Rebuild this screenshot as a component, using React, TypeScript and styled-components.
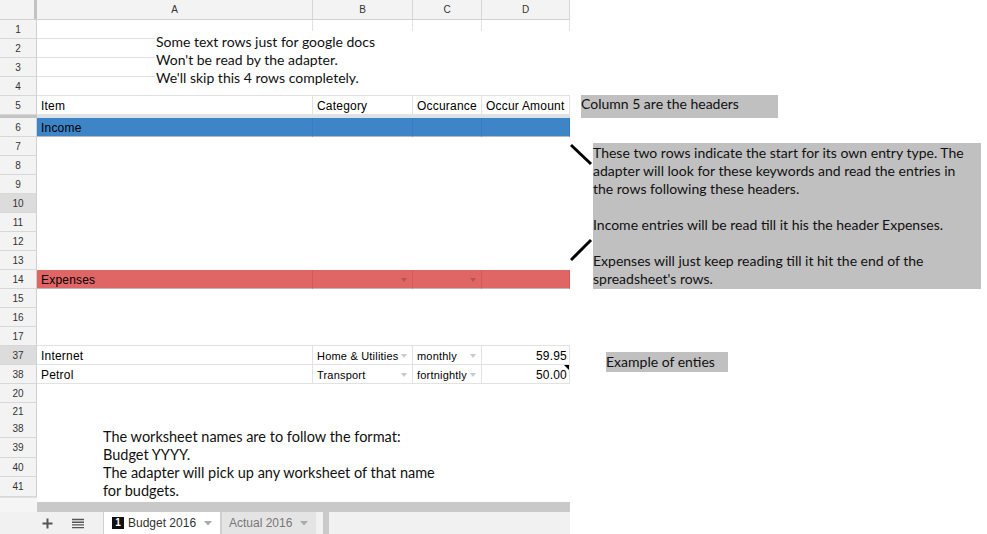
import React from "react";
import styled, { createGlobalStyle } from "styled-components";

const SHEET_FONT = `"Liberation Sans", Arial, sans-serif`;
const NOTE_FONT = `Lato, "Open Sans", sans-serif`;

const COLS = [276, 100, 69, 88];

const GlobalStyle = createGlobalStyle`
  html, body { margin: 0; padding: 0; background: #fff; }
  body { width: 987px; height: 534px; overflow: hidden; }
  #root { width: 987px; height: 534px; }
`;

const Page = styled.div`
  display: flex;
  width: 987px;
  height: 534px;
  background: #fff;
`;

const Sheet = styled.div`
  position: relative;
  width: 570px;
  flex: none;
  display: flex;
  flex-direction: column;
  font-family: ${SHEET_FONT};
  color: #000;
`;

const HeaderRow = styled.div`
  display: flex;
  height: 20px;
  flex: none;
  box-sizing: border-box;
  background: #f3f3f3;
  border-bottom: 1px solid #d0d0d0;
`;

const Corner = styled.div`
  width: 37px;
  box-sizing: border-box;
  border-right: 3px solid #c2c2c2;
`;

const ColHead = styled.div<{ $w: number }>`
  width: ${(p) => p.$w}px;
  box-sizing: border-box;
  border-right: 1px solid #d6d6d6;
  display: flex;
  align-items: center;
  justify-content: center;
  font-size: 10px;
  color: #333;
`;

const Row = styled.div<{ $h: number }>`
  display: flex;
  flex: none;
  height: ${(p) => p.$h}px;
`;

const RowNum = styled.div<{ $active?: boolean; $noLine?: boolean }>`
  width: 37px;
  flex: none;
  box-sizing: border-box;
  background: ${(p) => (p.$active ? "#dcdcdc" : "#f3f3f3")};
  border-right: 1px solid #d0d0d0;
  border-bottom: ${(p) => (p.$noLine ? "none" : "1px solid #d8d8d8")};
  display: flex;
  align-items: center;
  justify-content: center;
  font-size: 10px;
  color: #333;
`;

type Tone = "plain" | "income" | "expense";

const toneBg: Record<Tone, string> = {
  plain: "#ffffff",
  income: "#3d85c6",
  expense: "#e06666",
};

const toneLine: Record<Tone, string> = {
  plain: "#e2e2e2",
  income: "#3a7dbb",
  expense: "#d25a5a",
};

const Cell = styled.div<{ $w: number; $tone?: Tone; $right?: boolean; $size?: number }>`
  position: relative;
  width: ${(p) => p.$w}px;
  flex: none;
  box-sizing: border-box;
  display: flex;
  align-items: center;
  justify-content: ${(p) => (p.$right ? "flex-end" : "flex-start")};
  padding: 1px 2px 0 4px;
  font-size: ${(p) => p.$size ?? 12}px;
  letter-spacing: 0.2px;
  white-space: nowrap;
  background: ${(p) => toneBg[p.$tone ?? "plain"]};
  border-right: 1px solid ${(p) => toneLine[p.$tone ?? "plain"]};
  border-bottom: 1px solid ${(p) => (p.$tone && p.$tone !== "plain" ? "#b9b9b9" : "#e2e2e2")};
`;

const Blank = styled.div<{ $line?: boolean }>`
  flex: 1;
  background: #fff;
  border-bottom: ${(p) => (p.$line ? "1px solid #e2e2e2" : "none")};
`;

const Caret = styled.span<{ $dark?: boolean }>`
  margin-left: auto;
  margin-right: 3px;
  width: 0;
  height: 0;
  border-left: 3.5px solid transparent;
  border-right: 3.5px solid transparent;
  border-top: 4px solid ${(p) => (p.$dark ? "rgba(0,0,0,0.18)" : "#c9c9c9")};
`;

const NoteMark = styled.span`
  position: absolute;
  top: 0;
  right: 0;
  width: 0;
  height: 0;
  border-left: 5px solid transparent;
  border-top: 5px solid #000;
`;

const FreezeBar = styled.div`
  display: flex;
  height: 3px;
  flex: none;
  background: #dde1e6;
  &::before {
    content: "";
    width: 37px;
    background: #c4c4c4;
  }
`;

const ScrollStrip = styled.div`
  display: flex;
  height: 15px;
  flex: none;
  align-items: flex-end;
`;

const ScrollCorner = styled.div`
  width: 37px;
  height: 15px;
  box-sizing: border-box;
  background: #f5f5f5;
  border-top: 1px solid #e0e0e0;
`;

const ScrollTrack = styled.div`
  flex: 1;
  height: 10px;
  background: #c9c9c9;
`;

const TabBar = styled.div`
  display: flex;
  height: 22px;
  flex: none;
  background: #f1f1f1;
  font-size: 12px;
`;

const TabTools = styled.div`
  width: 103px;
  display: flex;
  align-items: center;
  padding-left: 42px;
  gap: 19px;
  box-sizing: border-box;
  color: #666;
`;

const Tab = styled.div<{ $active?: boolean; $w: number }>`
  width: ${(p) => p.$w}px;
  box-sizing: border-box;
  display: flex;
  align-items: center;
  padding: 0 4px 0 ${(p) => (p.$active ? 8 : 7)}px;
  background: ${(p) => (p.$active ? "#ffffff" : "#e4e4e4")};
  color: ${(p) => (p.$active ? "#333" : "#777")};
  border-left: 1px solid #d0d0d0;
  border-right: ${(p) => (p.$active ? "1px solid #d0d0d0" : "none")};
`;

const Badge = styled.span`
  width: 12px;
  height: 12px;
  margin-right: 4px;
  background: #111;
  color: #fff;
  font-size: 10px;
  font-weight: bold;
  display: flex;
  align-items: center;
  justify-content: center;
  line-height: 1;
`;

const TabGap = styled.div`
  width: 7px;
`;

const TabDivider = styled.div`
  width: 6px;
  background: #cacaca;
`;

const TextBox = styled.div<{
  $top: number;
  $left: number;
  $w: number;
  $h: number;
  $padTop: number;
  $padLeft: number;
  $size: number;
}>`
  position: absolute;
  top: ${(p) => p.$top}px;
  left: ${(p) => p.$left}px;
  width: ${(p) => p.$w}px;
  height: ${(p) => p.$h}px;
  box-sizing: border-box;
  padding: ${(p) => p.$padTop}px 0 0 ${(p) => p.$padLeft}px;
  background: #fff;
  font-family: ${NOTE_FONT};
  font-size: ${(p) => p.$size}px;
  line-height: 18px;
  color: #111;
  white-space: nowrap;
`;

const Notes = styled.div`
  flex: 1;
  display: flex;
  flex-direction: column;
  align-items: flex-start;
  font-family: ${NOTE_FONT};
  font-size: 14px;
  line-height: 18px;
  color: #111;
`;

const Callout = styled.div<{ $w: number; $h: number; $pad?: number }>`
  width: ${(p) => p.$w}px;
  height: ${(p) => p.$h}px;
  box-sizing: border-box;
  padding-top: ${(p) => p.$pad ?? 0}px;
  background: #c0c0c0;
  white-space: nowrap;
`;

const HeadersNote = styled(Callout)`
  margin: 95px 0 0 11px;
`;

const ConnectorRow = styled.div`
  display: flex;
  margin-top: 25px;
`;

const ExampleNote = styled(Callout)`
  margin: 63px 0 0 36px;
`;

type DataRow = {
  n: string;
  h?: number;
  kind: "cells" | "blank";
  tone?: Tone;
  active?: boolean;
  noLine?: boolean;
  line?: boolean;
  cells?: { text?: string; right?: boolean; size?: number; caret?: boolean; note?: boolean }[];
};

const rows: DataRow[] = [
  { n: "1", kind: "cells", cells: [{}, {}, {}, {}] },
  { n: "2", kind: "cells", cells: [{}, {}, {}, {}] },
  { n: "3", kind: "cells", cells: [{}, {}, {}, {}] },
  { n: "4", kind: "cells", cells: [{}, {}, {}, {}] },
  {
    n: "5",
    kind: "cells",
    cells: [{ text: "Item" }, { text: "Category" }, { text: "Occurance" }, { text: "Occur Amount" }],
  },
];

const rowsAfterFreeze: DataRow[] = [
  { n: "6", kind: "cells", tone: "income", cells: [{ text: "Income" }, {}, {}, {}] },
  { n: "7", kind: "blank" },
  { n: "8", kind: "blank" },
  { n: "9", kind: "blank" },
  { n: "10", kind: "blank", active: true },
  { n: "11", kind: "blank" },
  { n: "12", kind: "blank" },
  { n: "13", kind: "blank" },
  {
    n: "14",
    kind: "cells",
    tone: "expense",
    cells: [{ text: "Expenses" }, { caret: true }, { caret: true }, {}],
  },
  { n: "15", kind: "blank" },
  { n: "16", kind: "blank" },
  { n: "17", kind: "blank", line: true },
  {
    n: "37",
    kind: "cells",
    active: true,
    cells: [
      { text: "Internet" },
      { text: "Home & Utilities", size: 11, caret: true },
      { text: "monthly", size: 11, caret: true },
      { text: "59.95", right: true },
    ],
  },
  {
    n: "38",
    kind: "cells",
    cells: [
      { text: "Petrol" },
      { text: "Transport", size: 11, caret: true },
      { text: "fortnightly", size: 11, caret: true },
      { text: "50.00", right: true, note: true },
    ],
  },
  { n: "20", kind: "blank" },
  { n: "21", kind: "blank", h: 17, noLine: true },
  { n: "38", kind: "blank", h: 18 },
  { n: "39", kind: "blank", h: 20 },
  { n: "40", kind: "blank", h: 19 },
  { n: "41", kind: "blank", h: 20 },
];

function SheetRow({ r }: { r: DataRow }) {
  return (
    <Row $h={r.h ?? 19}>
      <RowNum $active={r.active} $noLine={r.noLine}>
        {r.n}
      </RowNum>
      {r.kind === "blank" ? (
        <Blank $line={r.line} />
      ) : (
        r.cells!.map((c, i) => (
          <Cell key={i} $w={COLS[i]} $tone={r.tone} $right={c.right} $size={c.size}>
            {c.text}
            {c.caret && <Caret $dark={r.tone === "expense"} />}
            {c.note && <NoteMark />}
          </Cell>
        ))
      )}
    </Row>
  );
}

function PlusIcon() {
  return (
    <svg width="11" height="11" viewBox="0 0 11 11">
      <path d="M5.5 0.5v10M0.5 5.5h10" stroke="#555" strokeWidth="2" />
    </svg>
  );
}

function ListIcon() {
  return (
    <svg width="12" height="11" viewBox="0 0 12 11">
      <path d="M0 1.5h12M0 4.2h12M0 6.9h12M0 9.6h12" stroke="#555" strokeWidth="1.4" />
    </svg>
  );
}

function TabCaret() {
  return (
    <svg width="8" height="5" viewBox="0 0 8 5" style={{ marginLeft: "auto", marginRight: 4 }}>
      <path d="M0 0h8L4 4.5z" fill="#aaa" />
    </svg>
  );
}

function Connectors() {
  return (
    <svg width="23" height="146" viewBox="0 0 23 146">
      <path d="M1 2L21 21" stroke="#000" strokeWidth="3" />
      <path d="M1 117L21 97" stroke="#000" strokeWidth="3" />
    </svg>
  );
}

export default function App() {
  return (
    <>
      <GlobalStyle />
      <Page>
        <Sheet>
          <HeaderRow>
            <Corner />
            {["A", "B", "C", "D"].map((l, i) => (
              <ColHead key={l} $w={COLS[i]}>
                {l}
              </ColHead>
            ))}
          </HeaderRow>
          {rows.map((r, i) => (
            <SheetRow key={"a" + i} r={r} />
          ))}
          <FreezeBar />
          {rowsAfterFreeze.map((r, i) => (
            <SheetRow key={"b" + i} r={r} />
          ))}
          <ScrollStrip>
            <ScrollCorner />
            <ScrollTrack />
          </ScrollStrip>
          <TabBar>
            <TabTools>
              <PlusIcon />
              <ListIcon />
            </TabTools>
            <Tab $active $w={118}>
              <Badge>1</Badge>
              Budget 2016
              <TabCaret />
            </Tab>
            <Tab $w={95}>
              Actual 2016
              <TabCaret />
            </Tab>
            <TabGap />
            <TabDivider />
          </TabBar>

          <TextBox $top={31} $left={155} $w={415} $h={64} $padTop={2} $padLeft={1} $size={14}>
            Some text rows just for google docs
            <br />
            Won't be read by the adapter.
            <br />
            We'll skip this 4 rows completely.
          </TextBox>
          <TextBox $top={386} $left={38} $w={532} $h={111} $padTop={42} $padLeft={65} $size={14.5}>
            The worksheet names are to follow the format:
            <br />
            Budget YYYY.
            <br />
            The adapter will pick up any worksheet of that name
            <br />
            for budgets.
          </TextBox>
        </Sheet>

        <Notes>
          <HeadersNote $w={197} $h={23}>
            Column 5 are the headers
          </HeadersNote>
          <ConnectorRow>
            <Connectors />
            <Callout $w={388} $h={146} $pad={1}>
              These two rows indicate the start for its own entry type. The
              <br />
              adapter will look for these keywords and read the entries in
              <br />
              the rows following these headers.
              <br />
              <br />
              Income entries will be read till it his the header Expenses.
              <br />
              <br />
              Expenses will just keep reading till it hit the end of the
              <br />
              spreadsheet's rows.
            </Callout>
          </ConnectorRow>
          <ExampleNote $w={122} $h={20} $pad={1}>
            Example of enties
          </ExampleNote>
        </Notes>
      </Page>
    </>
  );
}
